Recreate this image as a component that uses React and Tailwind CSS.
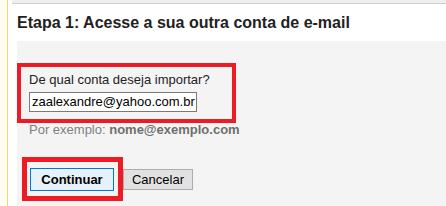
export default function App() {
  return (
    <div
      className="w-[446px] h-[206px] flex bg-white overflow-hidden text-[#222]"
      style={{ fontFamily: '"Liberation Sans", Arial, sans-serif' }}
    >
      <div className="w-[8px] shrink-0 bg-[#fffdf3] border-r border-[#f2d673]" />
      <div className="flex-1 flex flex-col">
        <div className="ml-[4px] h-[4px] bg-[#efefef] border-b border-[#cfcfcf]" />
        <h1 className="pl-[9px] mt-[10px] text-[16px] leading-[18px] font-bold text-[#222]">
          Etapa 1: Acesse a sua outra conta de e-mail
        </h1>
        <div className="ml-[9px] mt-[9px] flex-1 bg-[#f4f4f4] pt-[22px]">
          <div className="w-[219px] h-[60px] border-[4px] border-[#ed1c24] pl-[8px] pt-[5px]">
            <label className="block text-[13px] leading-[15px] text-[#222]">
              De qual conta deseja importar?
            </label>
            <div className="mt-[5px] w-[168px] h-[20px] bg-white border border-[#7a7a7a] pl-[2px] text-[13px] leading-[18px] text-black overflow-hidden whitespace-nowrap">
              zaalexandre@yahoo.com.br
            </div>
          </div>
          <p className="pl-[12px] -mt-[1px] text-[13px] leading-[15px] text-[#808080]">
            Por exemplo: <span className="font-bold text-[#6f6f6f]">nome@exemplo.com</span>
          </p>
          <div className="flex items-center mt-[20px] ml-[5px]">
            <div className="border-[5px] border-[#ed1c24] pl-[3px] pr-[4px] pt-[5px] pb-[5px]">
              <button className="w-[84px] h-[23px] bg-[#e5f1fb] border border-[#0078d7] text-[13px] font-bold text-black">
                Continuar
              </button>
            </div>
            <button className="w-[70px] h-[21px] bg-[#e1e1e1] border border-[#adadad] text-[13px] text-black">
              Cancelar
            </button>
          </div>
        </div>
      </div>
    </div>
  )
}
